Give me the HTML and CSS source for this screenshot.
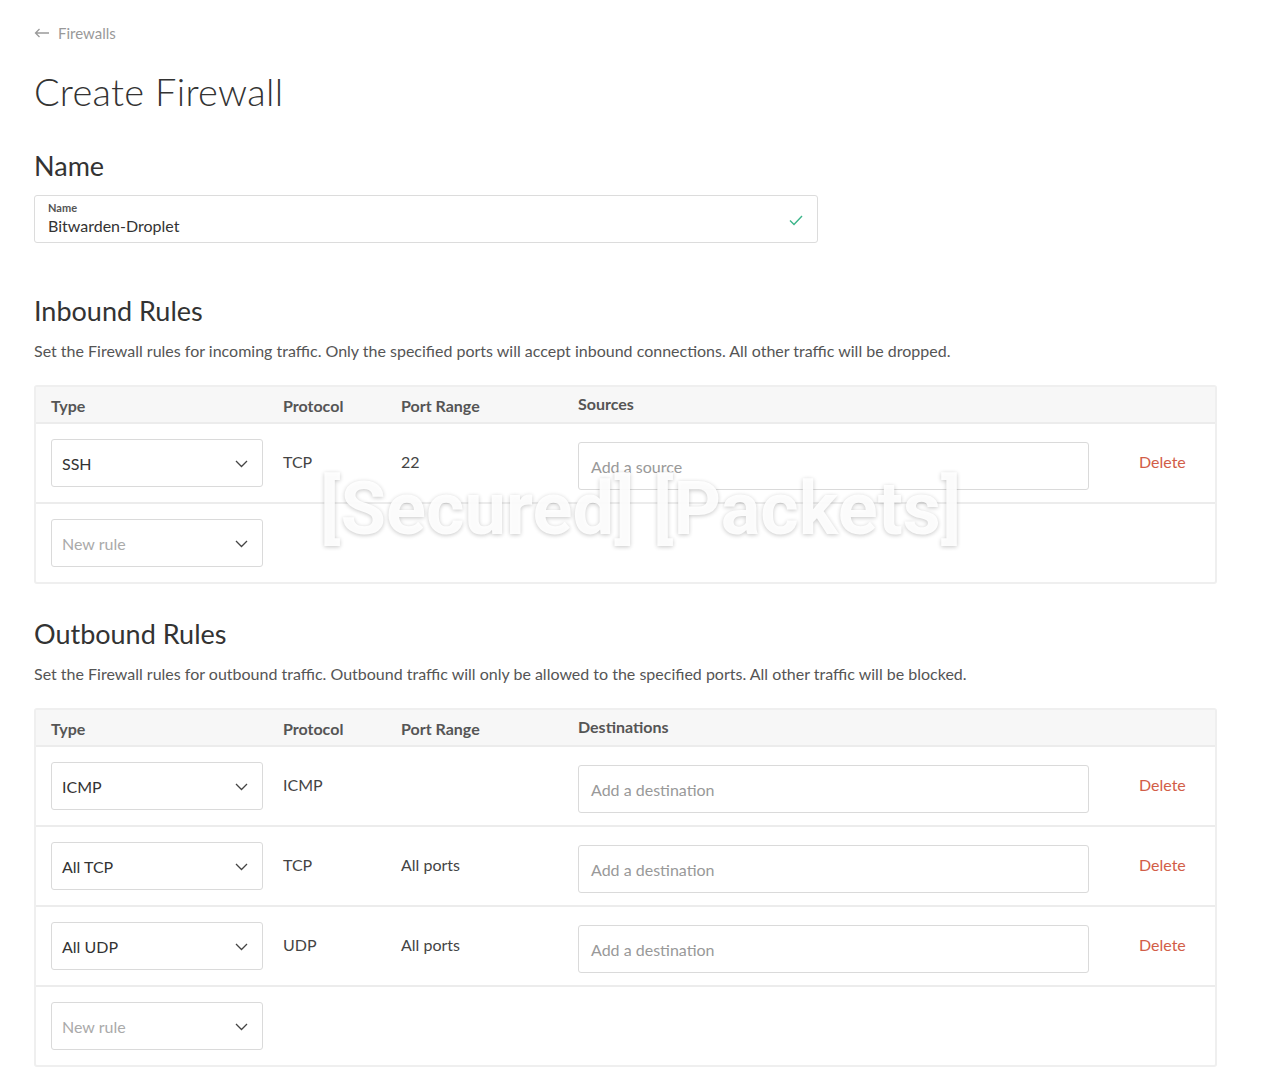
FILE: index.html
```html
<!DOCTYPE html>
<html>
<head>
<meta charset="utf-8">
<link rel="stylesheet" href="styles.css">
</head>
<body>
<div class="page">
  <a class="back" href="#"><svg class="back-arrow" width="16" height="10" viewBox="0 0 16 10"><path d="M15 5H1.5M5.5 1L1.5 5l4 4" fill="none" stroke="#9a9a9a" stroke-width="1.3"/></svg><span>Firewalls</span></a>
  <h1 class="title">Create Firewall</h1>

  <h2 class="section-title name-title">Name</h2>
  <div class="name-field">
    <div class="name-inner">
      <div class="name-label">Name</div>
      <div class="name-value">Bitwarden-Droplet</div>
    </div>
    <svg class="check" width="14" height="11" viewBox="0 0 14 11"><path d="M1 5.5l4 4L13 1" fill="none" stroke="#3bb58a" stroke-width="1.4"/></svg>
  </div>

  <h2 class="section-title rules-title">Inbound Rules</h2>
  <p class="desc">Set the Firewall rules for incoming traffic. Only the specified ports will accept inbound connections. All other traffic will be dropped.</p>
  <div class="table">
    <div class="row head">
      <div>Type</div><div>Protocol</div><div>Port Range</div><div class="hd-last">Sources</div><div></div>
    </div>
    <div class="row">
      <div><div class="select"><span>SSH</span><svg class="chev" width="13" height="8" viewBox="0 0 13 8"><path d="M1 1l5.5 5.5L12 1" fill="none" stroke="#444" stroke-width="1.3"/></svg></div></div>
      <div class="cell">TCP</div><div class="cell">22</div>
      <div><div class="input">Add a source</div></div>
      <div class="del">Delete</div>
    </div>
    <div class="row">
      <div><div class="select placeholder"><span>New rule</span><svg class="chev" width="13" height="8" viewBox="0 0 13 8"><path d="M1 1l5.5 5.5L12 1" fill="none" stroke="#444" stroke-width="1.3"/></svg></div></div>
      <div></div><div></div><div></div><div></div>
    </div>
    <div class="watermark">[Secured] [Packets]</div>
  </div>

  <h2 class="section-title rules-title out">Outbound Rules</h2>
  <p class="desc">Set the Firewall rules for outbound traffic. Outbound traffic will only be allowed to the specified ports. All other traffic will be blocked.</p>
  <div class="table">
    <div class="row head">
      <div>Type</div><div>Protocol</div><div>Port Range</div><div class="hd-last">Destinations</div><div></div>
    </div>
    <div class="row">
      <div><div class="select"><span>ICMP</span><svg class="chev" width="13" height="8" viewBox="0 0 13 8"><path d="M1 1l5.5 5.5L12 1" fill="none" stroke="#444" stroke-width="1.3"/></svg></div></div>
      <div class="cell">ICMP</div><div class="cell"></div>
      <div><div class="input">Add a destination</div></div>
      <div class="del">Delete</div>
    </div>
    <div class="row">
      <div><div class="select"><span>All TCP</span><svg class="chev" width="13" height="8" viewBox="0 0 13 8"><path d="M1 1l5.5 5.5L12 1" fill="none" stroke="#444" stroke-width="1.3"/></svg></div></div>
      <div class="cell">TCP</div><div class="cell">All ports</div>
      <div><div class="input">Add a destination</div></div>
      <div class="del">Delete</div>
    </div>
    <div class="row">
      <div><div class="select"><span>All UDP</span><svg class="chev" width="13" height="8" viewBox="0 0 13 8"><path d="M1 1l5.5 5.5L12 1" fill="none" stroke="#444" stroke-width="1.3"/></svg></div></div>
      <div class="cell">UDP</div><div class="cell">All ports</div>
      <div><div class="input">Add a destination</div></div>
      <div class="del">Delete</div>
    </div>
    <div class="row">
      <div><div class="select placeholder"><span>New rule</span><svg class="chev" width="13" height="8" viewBox="0 0 13 8"><path d="M1 1l5.5 5.5L12 1" fill="none" stroke="#444" stroke-width="1.3"/></svg></div></div>
      <div></div><div></div><div></div><div></div>
    </div>
  </div>
</div>
</body>
</html>
```
FILE: styles.css
```css
* { box-sizing: border-box; }
html, body { margin: 0; padding: 0; background: #fff; }
body {
  font-family: Lato, "Open Sans", "Liberation Sans", sans-serif;
  color: #444;
  font-size: 16px;
}
.page {
  padding: 23px 47px 40px 34px;
}
.back {
  display: flex;
  align-items: center;
  gap: 8px;
  color: #999;
  text-decoration: none;
  font-size: 15px;
  height: 20px;
}
.back-arrow { display: block; }
.title {
  margin: 25px 0 0;
  font-size: 38px;
  font-weight: 300;
  color: #333;
  line-height: 46px;
  letter-spacing: 0.3px;
}
.section-title {
  margin: 0;
  font-size: 27px;
  font-weight: 400;
  color: #333;
  line-height: 32px;
}
.name-title { margin-top: 36px; }
.name-field {
  margin-top: 13px;
  width: 784px;
  height: 48px;
  border: 1px solid #dcdcdc;
  border-radius: 3px;
  display: flex;
  align-items: center;
  justify-content: space-between;
  padding: 0 14px 0 13px;
}
.name-label {
  font-size: 11px;
  font-weight: 700;
  color: #555;
  line-height: 12px;
}
.name-value {
  font-size: 16px;
  color: #333;
  line-height: 20px;
  margin-top: 2px;
}
.check { display: block; margin-top: 2px; }
.rules-title { margin-top: 52px; }
.rules-title.out { margin-top: 34px; }
.desc {
  margin: 14px 0 0;
  font-size: 16px;
  line-height: 20px;
  color: #555;
}
.table {
  position: relative;
  margin-top: 24px;
  border: 2px solid #efefef;
  border-radius: 3px;
}
.row {
  display: grid;
  grid-template-columns: 232px 118px 177px 561px 1fr;
  align-items: center;
  height: 80px;
  padding-left: 15px;
  border-top: 2px solid #ececec;
}
.row.head {
  height: 35px;
  border-top: 0;
  background: #f7f7f7;
  font-weight: 700;
  color: #555;
  font-size: 16px;
}
.row.head > div { padding-top: 1px; }
.row.head .hd-last { margin-top: -4px; }
.cell { color: #444; margin-top: -4px; }
.select {
  width: 212px;
  height: 48px;
  border: 1px solid #dadada;
  border-radius: 3px;
  display: flex;
  align-items: center;
  justify-content: space-between;
  padding: 0 14px 0 10px;
  color: #333;
}
.select.placeholder { color: #aaa; }
.chev { display: block; margin-top: 2px; }
.input {
  width: 511px;
  height: 48px;
  margin-top: 6px;
  border: 1px solid #dadada;
  border-radius: 3px;
  display: flex;
  align-items: center;
  padding: 0 12px;
  color: #999;
}
.del {
  color: #d25d48;
  margin-top: -4px;
}
.watermark {
  position: absolute;
  left: 284px;
  top: 97px;
  font-family: Roboto, "Liberation Sans", Arial, sans-serif;
  font-weight: 700;
  font-size: 74px;
  line-height: 50px;
  letter-spacing: 0;
  color: rgba(255,255,255,0.92);
  text-shadow: 0 1px 4px rgba(0,0,0,0.22);
  pointer-events: none;
  white-space: nowrap;
}
```
